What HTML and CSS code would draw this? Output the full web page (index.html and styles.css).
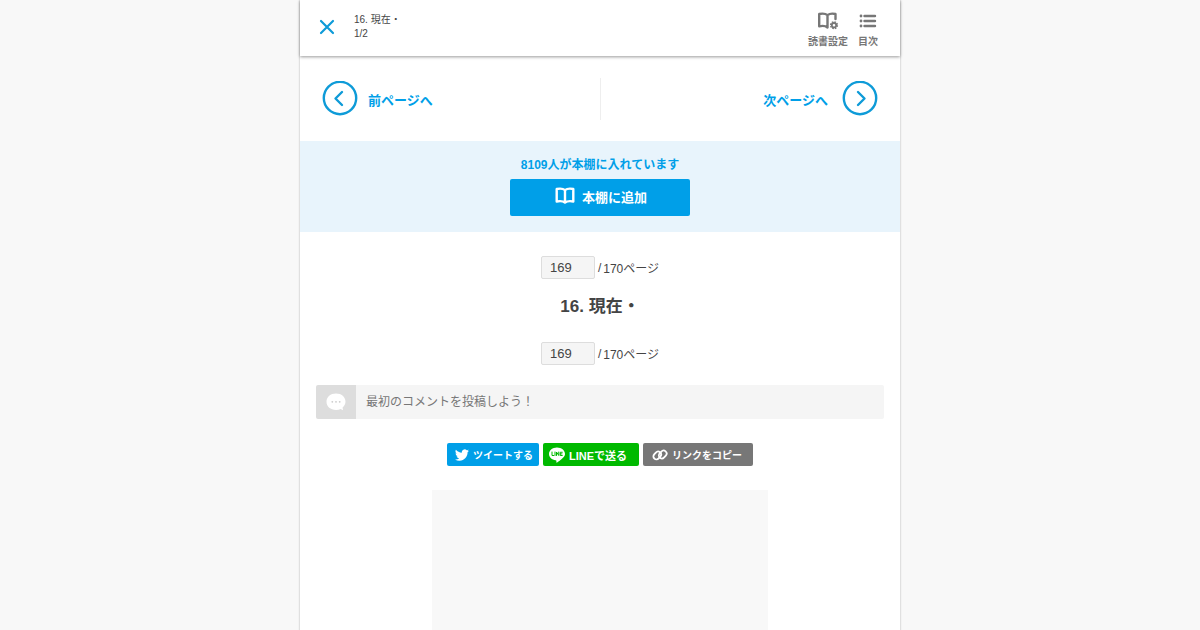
FILE: index.html
```
<!DOCTYPE html>
<html lang="ja">
<head>
    <meta charset="UTF-8">
    <meta name="viewport" content="width=device-width, initial-scale=1.0">
    <title>16. 現在・</title>
    <link rel="stylesheet" href="styles.css">
</head>
<body>
    <div class="page">
        <header class="header">
            <a class="close" href="#" aria-label="閉じる">
                <svg width="16" height="16" viewBox="0 0 16 16"><path d="M2 2l12 12M14 2L2 14"/></svg>
            </a>
            <div class="header-title">
                <p>16. 現在・</p>
                <p>1/2</p>
            </div>
            <nav class="header-menu">
                <button type="button">
                    <svg width="22" height="18" viewBox="0 0 22 18">
                        <path class="line" d="M10.500 3.200C8.500 1.500 5.500 1.300 2.200 2v12.300c3-.7 6.300-.5 8.300 1.200V3.200C12.500 1.500 15.500 1.300 18.500 2v5"/>
                        <circle class="gear" cx="17" cy="13.200" r="2.200"/>
                        <circle class="teeth" cx="17" cy="13.200" r="3.400"/>
                    </svg>
                    <span>読書設定</span>
                </button>
                <button type="button">
                    <svg width="18" height="18" viewBox="0 0 18 18">
                        <path class="line" d="M5.500 4H16M5.500 9H16M5.500 14H16"/>
                        <path class="dots" d="M2 4h.01M2 9h.01M2 14h.01"/>
                    </svg>
                    <span>目次</span>
                </button>
            </nav>
        </header>

        <nav class="pager">
            <a class="pager-prev" href="#">
                <svg width="36" height="36" viewBox="0 0 36 36"><circle cx="18" cy="17" r="16.200"/><path d="M20 11l-6.500 6.500L20 24"/></svg>
                <span>前ページへ</span>
            </a>
            <a class="pager-next" href="#">
                <span>次ページへ</span>
                <svg width="36" height="36" viewBox="0 0 36 36"><circle cx="18" cy="17" r="16.200"/><path d="M16 11l6.500 6.500L16 24"/></svg>
            </a>
        </nav>

        <section class="shelf">
            <p>8109人が本棚に入れています</p>
            <button class="shelf-button" type="button">
                <svg width="20" height="18" viewBox="0 0 20 18"><path d="M10 3.200C8 1.500 5 1.300 1.700 2v12.500c3.300-.7 6.300-.5 8.300 1.200 2-1.700 5-1.900 8.300-1.200V2C15 1.300 12 1.500 10 3.200zM10 3.200v12.300"/></svg>
                <span>本棚に追加</span>
            </button>
        </section>

        <main class="content">
            <form class="page-jump">
                <input type="text" value="169" aria-label="ページ番号">
                <span>/</span><span>170ページ</span>
            </form>
            <h1>16. 現在・</h1>
            <form class="page-jump">
                <input type="text" value="169" aria-label="ページ番号">
                <span>/</span><span>170ページ</span>
            </form>

            <div class="comment">
                <label class="comment-icon" for="comment" aria-label="コメント">
                    <svg width="20" height="18" viewBox="0 0 20 18">
                        <path fill="#fff" d="M10 .5C4.600.5.5 4 .5 8.800s4.100 8.200 9.500 8.200c1.700 0 3.300-.4 4.700-1.100l2.300 1.300-.4-2.700c1.800-1.500 2.900-3.500 2.900-5.700C19.500 4 15.400.5 10 .5z"/>
                        <g fill="#ccc"><circle cx="6.300" cy="8.800" r=".9"/><circle cx="10" cy="8.800" r=".9"/><circle cx="13.700" cy="8.800" r=".9"/></g>
                    </svg>
                </label>
                <input id="comment" type="text" placeholder="最初のコメントを投稿しよう！">
            </div>

            <div class="share">
                <a class="share-twitter" href="#">
                    <svg width="14" height="14" viewBox="0 0 24 24"><path fill="#fff" d="M23.950 4.570a10 10 0 0 1-2.820.77 4.960 4.960 0 0 0 2.160-2.720c-.95.55-2 .95-3.130 1.180a4.920 4.920 0 0 0-8.380 4.480C7.690 8.090 4.070 6.130 1.640 3.160a4.920 4.920 0 0 0 1.520 6.570 4.900 4.900 0 0 1-2.230-.61v.06a4.920 4.920 0 0 0 3.950 4.830 5 5 0 0 1-2.210.08 4.940 4.940 0 0 0 4.600 3.420A9.870 9.870 0 0 1 0 19.540a13.990 13.990 0 0 0 7.550 2.210c9.050 0 14-7.500 14-13.980 0-.21 0-.42-.02-.63a9.940 9.940 0 0 0 2.420-2.570z"/></svg>
                    <span>ツイートする</span>
                </a>
                <a class="share-line" href="#">
                    <svg width="16" height="16" viewBox="0 0 32 32">
                        <path fill="#fff" d="M16 1C7.200 1 0 6.700 0 13.800c0 6.300 5.700 11.600 13.400 12.600 1.800.4 1.600 1.200 1.200 4.300 0 .7.300 1 1.200.5 1-.5 8-4.800 11.700-9.200 3-3.200 4.500-5.400 4.500-8.200C32 6.700 24.800 1 16 1z"/>
                        <path class="line-word" d="M6 10v7h3.500M12 10v7M15 17v-7l4.500 7v-7M26.500 10.500h-4v6.500h4M22.500 13.800h3.500"/>
                    </svg>
                    <span>LINEで送る</span>
                </a>
                <button class="share-copy" type="button">
                    <svg width="16" height="14" viewBox="0 0 16 14">
                        <rect x="1" y="4.500" width="8.500" height="6" rx="3" transform="rotate(-48 5.250 7.500)"/>
                        <rect x="6.500" y="3.500" width="8.500" height="6" rx="3" transform="rotate(-48 10.750 6.500)"/>
                    </svg>
                    <span>リンクをコピー</span>
                </button>
            </div>

            <div class="ad"></div>
        </main>
    </div>
</body>
</html>
```

FILE: styles.css
```
* {
    box-sizing: border-box;
}

body {
    margin: 0;
    background: #f8f8f8;
    color: #444;
    font-family: "Liberation Sans", "Noto Sans CJK JP", sans-serif;
    font-size: 12px;
}

p, h1 {
    margin: 0;
}

a {
    color: #009fe8;
    text-decoration: none;
}

button, input {
    border: 0;
    font-family: inherit;
    color: inherit;
}

svg {
    flex: none;
    fill: none;
    stroke-linecap: round;
    stroke-linejoin: round;
}

.page {
    max-width: 600px;
    min-height: 100vh;
    margin: 0 auto;
    background: #fff;
    box-shadow: 0 0 2px rgba(0, 0, 0, 0.3);
}

.header {
    display: flex;
    align-items: flex-start;
    height: 56px;
    padding: 12px 18px 0 19px;
    background: #fff;
    box-shadow: 0 1px 3px rgba(0, 0, 0, 0.4);
}

.close {
    padding-top: 7px;
}

.close svg {
    display: block;
    stroke: #0e9bd8;
    stroke-width: 2.2;
}

.header-title {
    flex: 1;
    padding: 1px 0 0 19px;
    font-size: 10px;
    line-height: 14px;
}

.header-menu {
    display: flex;
    gap: 2px;
}

.header-menu button {
    display: flex;
    flex-direction: column;
    align-items: center;
    gap: 5px;
    padding: 0 4px;
    background: none;
    color: #777;
    font-size: 10px;
    font-weight: bold;
    line-height: 14px;
}

.header-menu .line {
    stroke: #777;
    stroke-width: 2.4;
}

.header-menu .gear {
    stroke: #777;
    stroke-width: 1.8;
}

.header-menu .teeth {
    stroke: #777;
    stroke-width: 1.4;
    stroke-linecap: butt;
    stroke-dasharray: 1.6 1.07;
}

.header-menu .dots {
    stroke: #777;
    stroke-width: 2.8;
}

.pager {
    display: flex;
    padding: 22px 22px 21px;
    font-size: 13px;
    font-weight: bold;
}

.pager a {
    display: flex;
    flex: 1;
    align-items: center;
    height: 42px;
}

.pager svg {
    stroke: #0e9bd8;
    stroke-width: 2.4;
}

.pager-prev {
    gap: 10px;
    border-right: 1px solid #eee;
}

.pager-next {
    justify-content: flex-end;
    gap: 14px;
}

.shelf {
    display: flex;
    flex-direction: column;
    align-items: center;
    gap: 6px;
    padding: 16px;
    background: #e8f4fc;
    color: #009fe8;
    font-weight: bold;
    line-height: 16px;
}

.shelf-button {
    display: flex;
    align-items: center;
    justify-content: center;
    gap: 7px;
    width: 180px;
    height: 37px;
    padding: 0 4px 3px 6px;
    border-radius: 2px;
    background: #009fe8;
    color: #fff;
    font-size: 13px;
    font-weight: bold;
}

.shelf-button svg {
    stroke: #fff;
    stroke-width: 2.4;
}

.content {
    padding: 24px 16px;
}

.page-jump {
    display: flex;
    align-items: center;
    justify-content: center;
    gap: 2px;
    height: 23px;
}

.page-jump input {
    width: 54px;
    height: 23px;
    margin-right: 1px;
    padding: 0 8px;
    border: 1px solid #ddd;
    border-radius: 2px;
    background: #f5f5f5;
    font-size: 13px;
}

.content h1 {
    margin: 16px 0 24px;
    font-size: 17px;
    line-height: 23px;
    text-align: center;
}

.comment {
    display: flex;
    height: 34px;
    margin-top: 20px;
}

.comment-icon {
    display: flex;
    align-items: center;
    justify-content: center;
    width: 40px;
    border-radius: 2px 0 0 2px;
    background: #ddd;
}

.comment input {
    flex: 1;
    padding: 0 10px;
    border-radius: 0 2px 2px 0;
    background: #f5f5f5;
    font-size: 12px;
}

.comment input::placeholder {
    color: #777;
}

.share {
    display: flex;
    justify-content: center;
    gap: 4px;
    margin-top: 24px;
}

.share a,
.share button {
    display: flex;
    align-items: center;
    gap: 4px;
    height: 23px;
    border-radius: 2px;
    color: #fff;
    font-size: 10px;
    font-weight: bold;
    white-space: nowrap;
}

.share .share-twitter {
    width: 92px;
    padding: 0 8px;
    background: #009fe8;
}

.share .share-line {
    width: 96px;
    padding: 0 6px;
    background: #00b900;
    font-size: 11px;
}

.share .share-copy {
    width: 110px;
    padding: 0 9px;
    background: #777;
}

.line-word {
    stroke: #00b900;
    stroke-width: 2;
}

.share-copy svg {
    stroke: #fff;
    stroke-width: 1.8;
}

.ad {
    max-width: 336px;
    height: 280px;
    margin: 24px auto 0;
    background: #f8f8f8;
}
```
